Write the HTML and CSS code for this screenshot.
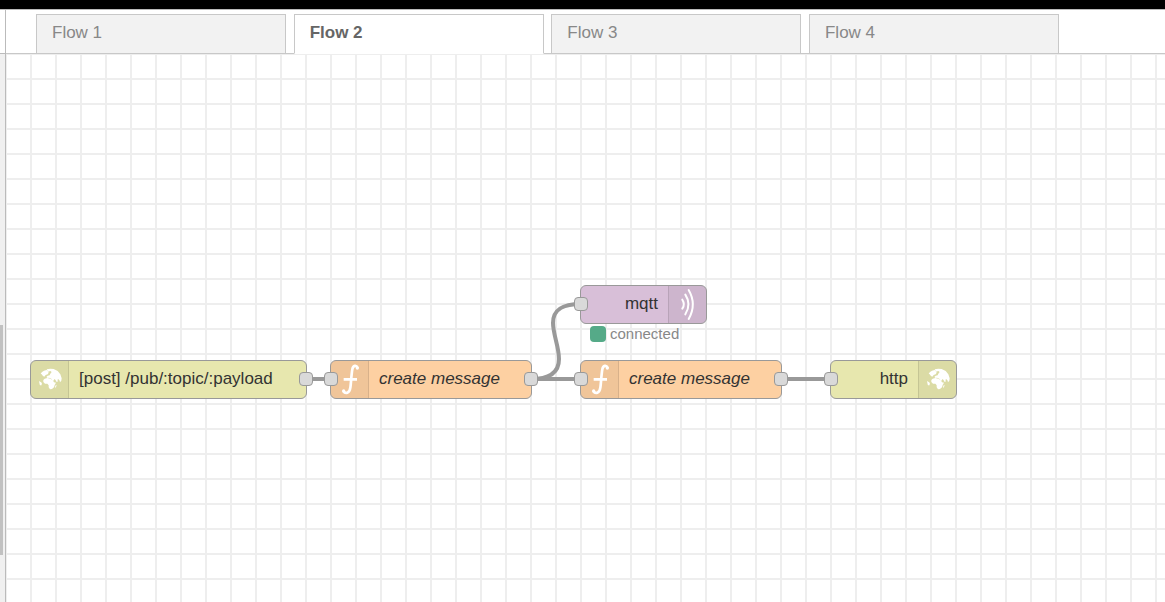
FILE: index.html
```html
<!DOCTYPE html>
<html lang="en">
<head>
<meta charset="utf-8">
<title>Flow 2</title>
<link rel="stylesheet" href="styles.css">
</head>
<body>
<svg class="defs" aria-hidden="true">
  <symbol id="globe" viewBox="0 0 114 114">
    <path d="M29 38 L33 33 L39 29 L47 27 L50 30 L53 35 L50 40 L44 42 L40 47 L36 45 L32 40 Z"/>
    <path d="M47 25 L58 23 L68 24 L80 30 L88 40 L92 52 L91 59 L87 64 L86 59 L83 55 L79 56 L81 61 L77 63 L73 56 L70 54 L68 59 L64 58 L61 53 L54 50 L50 51 L46 48 L50 44 L56 43 L58 38 L62 33 L58 30 L51 32 Z"/>
    <path d="M41 53 L49 51 L58 53 L65 57 L69 64 L75 65 L71 72 L69 79 L63 84 L57 85 L53 79 L53 73 L49 68 L42 68 L37 63 L37 57 Z"/>
    <path d="M24 60 L30 64 L33 68 L30 74 L26 70 Z"/>
    <path d="M73 74 L77 71 L75 79 L72 80 Z"/>
  </symbol>
  <symbol id="function" viewBox="0 0 114 114">
    <path class="stroke" d="M80 21 C76 11 66 13 64 25 C61 42 60 68 58 80 C56 97 43 100 37 90 M38 55 H78"/>
    <circle cx="79" cy="21" r="5"/><circle cx="38" cy="90" r="5"/>
  </symbol>
  <symbol id="waves" viewBox="0 0 114 114">
    <path class="stroke thin" d="M59 12 Q84 55 59 99 M49 26 Q68 55 49 85"/>
    <path class="stroke thin" d="M40 41 Q49 55 40 68"/>
  </symbol>
</svg>
<header class="topbar"></header>
<div class="app">
  <aside class="palette">
    <div class="palette-head"></div>
    <div class="palette-scroll"><div class="thumb"></div></div>
  </aside>
  <main class="workspace">
    <nav class="tabbar" aria-label="Flows">
      <div class="tabs">
        <a class="tab" href="#flow1">Flow 1</a>
        <a class="tab active" href="#flow2" aria-current="page">Flow 2</a>
        <a class="tab" href="#flow3">Flow 3</a>
        <a class="tab" href="#flow4">Flow 4</a>
      </div>
    </nav>
    <section class="canvas">
      <svg class="wires" aria-hidden="true">
        <path d="M300 325 H325 M525 325 H575 M775 325 H825"/>
        <path d="M525 325 C546 325 553 317 553 305 C553 293 547 280 547 269 C547 254 559 250 575 250"/>
      </svg>
      <div class="node http-in olive">
        <span class="icon"><svg><use href="#globe"/></svg></span>
        <span class="label">[post] /pub/:topic/:payload</span>
        <i class="port out"></i>
      </div>
      <div class="node create-a orange">
        <span class="icon"><svg><use href="#function"/></svg></span>
        <span class="label italic">create message</span>
        <i class="port in"></i><i class="port out"></i>
      </div>
      <div class="node create-b orange">
        <span class="icon"><svg><use href="#function"/></svg></span>
        <span class="label italic">create message</span>
        <i class="port in"></i><i class="port out"></i>
      </div>
      <div class="node mqtt purple end">
        <span class="label">mqtt</span>
        <span class="icon"><svg><use href="#waves"/></svg></span>
        <i class="port in"></i>
      </div>
      <div class="status"><i class="dot"></i>connected</div>
      <div class="node http-out olive end">
        <span class="label">http</span>
        <span class="icon"><svg><use href="#globe"/></svg></span>
        <i class="port in"></i>
      </div>
    </section>
  </main>
</div>
</body>
</html>
```
FILE: styles.css
```css
* { box-sizing: border-box; }
body {
  margin: 0;
  min-height: 100vh;
  display: flex;
  flex-direction: column;
  font-family: "Liberation Sans", Arial, sans-serif;
  font-size: 17px;
  line-height: 20px;
  color: #333;
  background: #fff;
}
.defs { position: absolute; width: 0; height: 0; }
.topbar { height: 9px; background: #000; }
.app { flex: 1; display: flex; border-top: 1px solid #bbb; }

.palette {
  width: 6px;
  display: flex;
  flex-direction: column;
  border-right: 1px solid #bbb;
}
.palette-head { height: 44px; border-bottom: 1px solid #bbb; }
.palette-scroll { flex: 1; padding-top: 271px; background: #f0f0f0; }
.thumb { width: 3px; height: 230px; background: #c1c1c1; }

.workspace { flex: 1; min-width: 0; display: flex; flex-direction: column; }
.tabbar {
  height: 44px;
  padding: 4px 30px 0;
  border-bottom: 1px solid #c8c8c8;
}
.tabs {
  display: flex;
  justify-content: space-between;
  max-width: 1023px;
}
.tab {
  flex: 0 1 250px;
  height: 40px;
  padding: 8px 15px;
  border: 1px solid #c8c8c8;
  background: #f2f2f2;
  color: #888;
  text-decoration: none;
}
.tab.active {
  border-bottom-color: #fff;
  background: #fff;
  color: #666;
  font-weight: bold;
}

.canvas {
  flex: 1;
  position: relative;
  overflow: hidden;
  background-color: #fff;
  background-image:
    linear-gradient(to right, #eee 2px, transparent 2px),
    linear-gradient(to bottom, #eee 2px, transparent 2px);
  background-size: 25px 25px;
  background-position: -1px -1px;
}
.wires {
  position: absolute;
  inset: 0;
  width: 100%;
  height: 100%;
  fill: none;
  stroke: #999;
  stroke-width: 4;
}
.node {
  position: absolute;
  display: flex;
  height: 39px;
  border: 1px solid #999;
  border-radius: 6px;
}
.http-in { left: 24px; top: 306px; width: 277px; }
.create-a { left: 324px; top: 306px; width: 202px; }
.create-b { left: 574px; top: 306px; width: 202px; }
.mqtt { left: 574px; top: 231px; width: 127px; }
.http-out { left: 824px; top: 306px; width: 127px; }
.olive { background: #e7e7ae; }
.orange { background: #fdd0a2; }
.purple { background: #d8bfd8; }
.end { justify-content: flex-end; }
.icon {
  width: 38px;
  background: rgba(0, 0, 0, 0.05);
  border-right: 1px solid rgba(0, 0, 0, 0.1);
  border-radius: 5px 0 0 5px;
}
.end .icon {
  border-right: 0;
  border-left: 1px solid rgba(0, 0, 0, 0.1);
  border-radius: 0 5px 5px 0;
}
.icon svg { display: block; width: 38px; height: 38px; fill: #fff; }
.stroke { fill: none; stroke: #fff; stroke-width: 8; }
.thin { stroke-width: 6; stroke-linecap: round; }
.label { padding: 8px 10px; white-space: nowrap; }
.italic { font-style: italic; }
.port {
  position: absolute;
  top: 11px;
  width: 14px;
  height: 14px;
  border: 1px solid #999;
  border-radius: 4px;
  background: #d9d9d9;
}
.port.in { left: -7px; }
.port.out { right: -7px; }
.status {
  position: absolute;
  left: 584px;
  top: 270px;
  display: flex;
  align-items: center;
  gap: 4px;
  font-size: 15px;
  color: #888;
}
.dot { width: 16px; height: 16px; border-radius: 4px; background: #5a8; }
```
